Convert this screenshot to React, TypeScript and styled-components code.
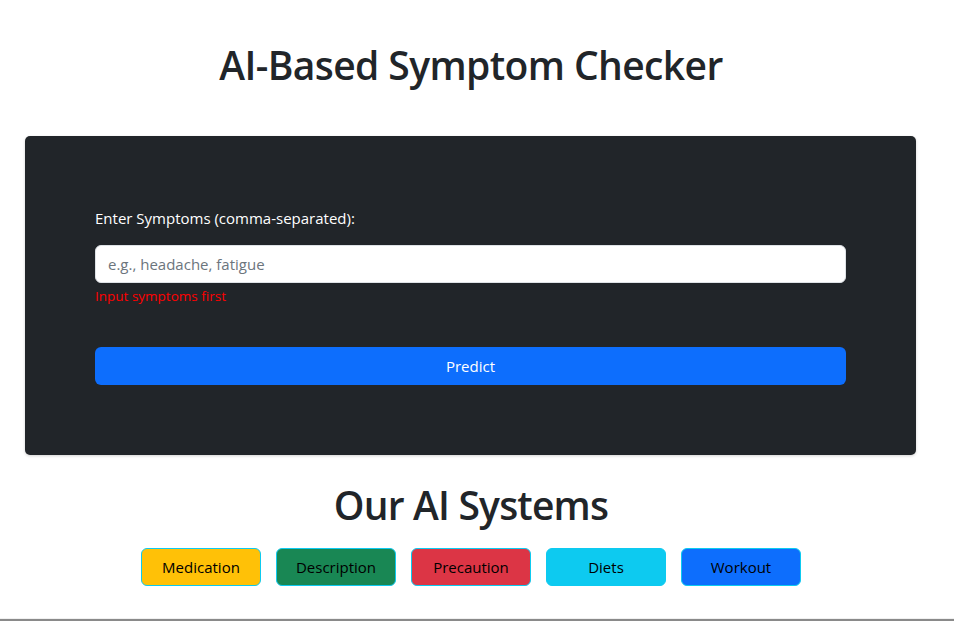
import React from "react";
import styled, { createGlobalStyle } from "styled-components";

const GlobalStyle = createGlobalStyle`
  html, body { margin: 0; padding: 0; background: #fff; }
  body {
    font-family: "Open Sans", "Noto Sans", "Liberation Sans", sans-serif;
    color: #212529;
    font-size: 16px;
    line-height: 1.5;
  }
  * { box-sizing: border-box; }
`;

const Page = styled.div`
  width: 100%;
  height: 621px;
  display: flex;
  flex-direction: column;
  overflow: hidden;
`;

const Content = styled.main`
  width: 942px;
  display: flex;
  flex-direction: column;
`;

const Title = styled.h1`
  margin: 41px 0 47px;
  font-size: 39px;
  line-height: 48px;
  font-weight: 600;
  letter-spacing: -0.6px;
  text-align: center;
  color: #212529;
`;

const Card = styled.div`
  margin: 0 26px 0 25px;
  background: #212529;
  border-radius: 5px;
  box-shadow: 0 1px 3px rgba(0, 0, 0, 0.18);
  padding: 70px;
  display: flex;
  flex-direction: column;
`;

const Label = styled.label`
  color: #fff;
  font-size: 15px;
  line-height: 24px;
  margin-bottom: 15px;
`;

const Input = styled.input`
  height: 38px;
  width: 100%;
  border: 1px solid #dee2e6;
  border-radius: 6px;
  padding: 6px 12px;
  font: inherit;
  font-size: 15px;
  color: #212529;
  background: #fff;
  &::placeholder { color: #6c757d; }
`;

const ErrorText = styled.div`
  color: #ff0000;
  font-size: 13.5px;
  line-height: 21px;
  margin-top: 3px;
`;

const PredictButton = styled.button`
  margin-top: 40px;
  height: 38px;
  width: 100%;
  border: none;
  border-radius: 6px;
  background: #0d6efd;
  color: #fff;
  font: inherit;
  font-size: 15px;
  cursor: pointer;
`;

const SubTitle = styled.h2`
  margin: 26px 0 19px;
  font-size: 39px;
  line-height: 48px;
  font-weight: 600;
  letter-spacing: -0.8px;
  text-align: center;
  color: #212529;
`;

const ButtonRow = styled.div`
  display: flex;
  justify-content: center;
  gap: 15px;
`;

const SystemButton = styled.button<{ $bg: string }>`
  width: 120px;
  height: 38px;
  border: 1px solid #0dcaf0;
  border-radius: 6px;
  background: ${(p) => p.$bg};
  color: #000;
  font: inherit;
  font-size: 15px;
  cursor: pointer;
`;

const Footer = styled.footer`
  margin-top: auto;
  height: 3px;
  border-top: 1px solid #f0f0f0;
  border-bottom: 2px solid #8a8a8a;
`;

const systems = [
  { name: "Medication", bg: "#ffc107" },
  { name: "Description", bg: "#198754" },
  { name: "Precaution", bg: "#dc3545" },
  { name: "Diets", bg: "#0dcaf0" },
  { name: "Workout", bg: "#0d6efd" },
];

export default function App() {
  return (
    <>
      <GlobalStyle />
      <Page>
        <Content>
          <Title>AI-Based Symptom Checker</Title>
          <Card>
            <Label htmlFor="symptoms">Enter Symptoms (comma-separated):</Label>
            <Input id="symptoms" placeholder="e.g., headache, fatigue" />
            <ErrorText>Input symptoms first</ErrorText>
            <PredictButton>Predict</PredictButton>
          </Card>
          <SubTitle>Our AI Systems</SubTitle>
          <ButtonRow>
            {systems.map((s) => (
              <SystemButton key={s.name} $bg={s.bg}>
                {s.name}
              </SystemButton>
            ))}
          </ButtonRow>
        </Content>
        <Footer />
      </Page>
    </>
  );
}
